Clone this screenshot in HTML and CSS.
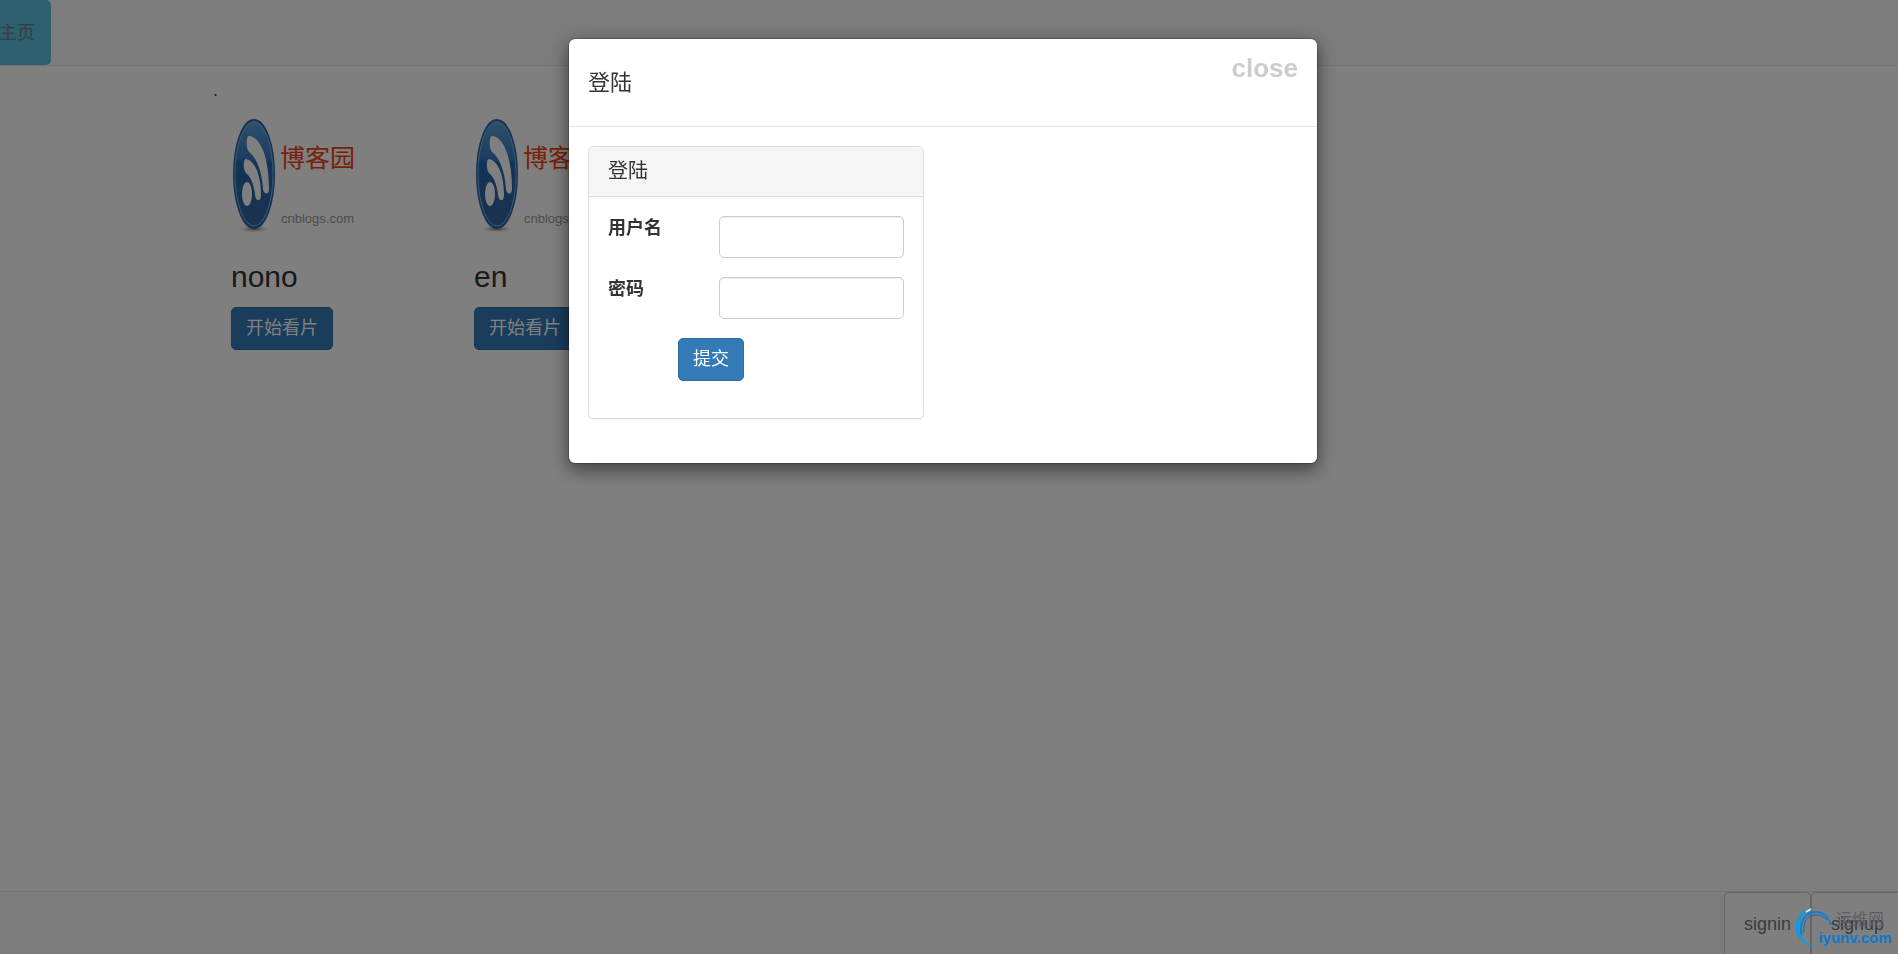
FILE: index.html
```
<!DOCTYPE html>
<html lang="zh-CN">
<head>
    <meta charset="UTF-8">
    <meta name="viewport" content="width=device-width, initial-scale=1">
    <title>主页</title>
    <link rel="stylesheet" href="styles.css">
</head>
<body>
    <!-- Shared logo artwork -->
    <svg class="defs" aria-hidden="true">
        <defs>
            <linearGradient id="ball" x1="0" y1="0" x2="0" y2="1">
                <stop offset="0" stop-color="#5f9fd8"/>
                <stop offset="0.35" stop-color="#3a7cc0"/>
                <stop offset="0.4" stop-color="#2068b2"/>
                <stop offset="1" stop-color="#38639f"/>
            </linearGradient>
            <radialGradient id="shade">
                <stop offset="0" stop-color="#6a625c"/>
                <stop offset="1" stop-color="#fff" stop-opacity="0"/>
            </radialGradient>
            <symbol id="logo" viewBox="0 0 128 128">
                <ellipse cx="23" cy="114" rx="18" ry="4" fill="url(#shade)"/>
                <ellipse cx="23" cy="59" rx="20" ry="54" fill="url(#ball)" stroke="#2e65a5" stroke-width="2"/>
                <ellipse cx="23" cy="59" rx="19" ry="52" fill="none" stroke="#78b8e6" stroke-width="1"/>
                <path d="M18 21C31 22 38 46 38 74C38 80 33 80 32 74C31 56 25 42 18 37C15 34 15 21 18 21Z" fill="#fff"/>
                <path d="M15 44C25 46 30 62 30 80C30 87 25 87 24 80C23 70 20 62 15 58C12 55 12 44 15 44Z" fill="#fff"/>
                <ellipse cx="16" cy="79" rx="5" ry="12" fill="#fff"/>
                <text class="logo-name" x="49" y="52">博客园</text>
                <text class="logo-domain" x="50" y="108">cnblogs.com</text>
            </symbol>
        </defs>
    </svg>

    <nav class="navbar navbar-top">
        <a href="#" class="btn-home">主页</a>
    </nav>

    <main class="container">
        <p class="dot">.</p>
        <div class="row">
            <div class="card">
                <svg class="card-img" role="img" aria-label="博客园"><use href="#logo"/></svg>
                <h3>nono</h3>
                <a href="#" class="btn">开始看片</a>
            </div>
            <div class="card">
                <svg class="card-img" role="img" aria-label="博客园"><use href="#logo"/></svg>
                <h3>en</h3>
                <a href="#" class="btn">开始看片</a>
            </div>
        </div>
    </main>

    <nav class="navbar navbar-bottom">
        <button type="button" class="btn-nav">signin</button>
        <button type="button" class="btn-nav">signup</button>
    </nav>

    <!-- Login modal -->
    <div class="modal" id="loginModal">
        <div class="modal-content" role="dialog" aria-labelledby="modalTitle">
            <div class="modal-header">
                <h4 id="modalTitle">登陆</h4>
                <button type="button" class="close">close</button>
            </div>
            <div class="modal-body">
                <div class="panel">
                    <div class="panel-heading">登陆</div>
                    <form class="panel-body">
                        <div class="form-group">
                            <label for="username">用户名</label>
                            <input type="text" id="username" name="username">
                        </div>
                        <div class="form-group">
                            <label for="password">密码</label>
                            <input type="password" id="password" name="password">
                        </div>
                        <button type="submit" class="btn btn-submit">提交</button>
                    </form>
                </div>
            </div>
        </div>
    </div>

    <!-- Site mark -->
    <div class="mark">
        <svg class="mark-ring" viewBox="0 0 40 42" aria-hidden="true">
            <path d="M20 2C8 3 1 12 2 23C3 33 10 39 20 40C11 37 6 31 5 23C4 13 10 5 20 2Z" fill="#00a0f0"/>
            <path d="M8 29C4 17 11 6 22 6C30 6 35 12 37 19" fill="none" stroke="#0a80d8" stroke-width="2"/>
            <path d="M10 26C8 16 14 9 22 9C27 9 31 11 33 14" fill="none" stroke="#0a6cc0" stroke-width="1"/>
            <path d="M12 6L17 3" stroke="#c8ecff" stroke-width="2"/>
        </svg>
        <div class="mark-text">
            <span class="mark-name">运维网</span>
            <span class="mark-domain">iyunv.com</span>
        </div>
    </div>
</body>
</html>
```
FILE: styles.css
```
* {
    box-sizing: border-box;
}

body {
    margin: 0;
    font-family: "Liberation Sans", "Noto Sans CJK SC", sans-serif;
    font-size: 18px;
    line-height: 25px;
    color: #333;
    background-color: #fff;
}

button,
input {
    font-family: inherit;
    font-size: inherit;
    line-height: inherit;
}

.defs {
    position: absolute;
    width: 0;
    height: 0;
}

/* Navbars */
.navbar {
    display: flex;
    background-color: #f8f8f8;
    overflow: hidden;
}

.navbar-top {
    border-bottom: 1px solid #e7e7e7;
}

.btn-home {
    margin-left: -17px;
    padding: 21px 16px 19px;
    border-radius: 5px;
    background-color: #5bc0de;
    color: #777;
    text-decoration: none;
}

.navbar-bottom {
    position: fixed;
    left: 0;
    right: 0;
    bottom: 0;
    height: 63px;
    justify-content: flex-end;
    align-items: flex-start;
    border-top: 1px solid #e7e7e7;
}

.btn-nav {
    flex: none;
    padding: 19px;
    border: 1px solid #ccc;
    border-radius: 5px;
    background-color: #fff;
    color: #777;
}

.btn-nav:last-child {
    margin-right: -6px;
}

/* Cards */
.container {
    max-width: 1472px;
    margin: 0 auto;
    padding: 12px 14px 0 0;
}

.dot {
    margin: 0 0 12px;
}

.row {
    display: grid;
    grid-template-columns: repeat(6, 1fr);
}

.card {
    padding: 0 18px;
}

.card-img {
    display: block;
    width: 128px;
    height: 128px;
}

.logo-name {
    font-family: "Noto Sans CJK SC", sans-serif;
    font-size: 25px;
    fill: #f04010;
}

.logo-domain {
    font-size: 13px;
    fill: #999;
}

.card h3 {
    margin: 17px 0 13px;
    font-size: 30px;
    font-weight: 500;
    line-height: 34px;
}

.btn {
    display: inline-block;
    padding: 8px 14px;
    border: 1px solid #2e6da4;
    border-radius: 5px;
    background-color: #337ab7;
    color: #fff;
    text-decoration: none;
    cursor: pointer;
}

/* Modal */
.modal {
    position: fixed;
    top: 0;
    left: 0;
    width: 100%;
    height: 100%;
    padding: 38px 12px 0 0;
    background-color: rgba(0, 0, 0, 0.5);
}

.modal-content {
    max-width: 750px;
    margin: 0 auto;
    border: 1px solid rgba(0, 0, 0, 0.2);
    border-radius: 7px;
    background-color: #fff;
    background-clip: padding-box;
    box-shadow: 0 6px 18px rgba(0, 0, 0, 0.5);
}

.modal-header {
    display: flex;
    justify-content: space-between;
    align-items: flex-start;
    padding: 17px 19px 16px;
    border-bottom: 1px solid #e5e5e5;
}

.modal-header h4 {
    margin: 12px 0;
    font-size: 22px;
    font-weight: 400;
    line-height: 30px;
}

.close {
    padding: 0;
    border: 0;
    background: none;
    color: #ccc;
    font-size: 26px;
    font-weight: bold;
    cursor: pointer;
}

.modal-body {
    padding: 19px 19px 44px;
}

.panel {
    max-width: 336px;
    border: 1px solid #ddd;
    border-radius: 5px;
    box-shadow: 0 1px 1px rgba(0, 0, 0, 0.05);
}

.panel-heading {
    padding: 12px 19px;
    border-bottom: 1px solid #ddd;
    border-radius: 4px 4px 0 0;
    background-color: #f5f5f5;
    font-size: 20px;
}

.panel-body {
    padding: 19px 19px 37px;
}

.form-group {
    display: grid;
    grid-template-columns: 3fr 5fr;
    align-items: start;
    margin-bottom: 19px;
}

.form-group label {
    font-weight: bold;
}

.form-group input {
    width: 100%;
    height: 42px;
    padding: 8px 14px;
    border: 1px solid #ccc;
    border-radius: 5px;
    background-color: #fff;
    box-shadow: inset 0 1px 1px rgba(0, 0, 0, 0.075);
}

.btn-submit {
    display: block;
    margin-left: 70px;
}

/* Site mark */
.mark {
    position: fixed;
    right: 6px;
    bottom: 6px;
    display: flex;
}

.mark-ring {
    width: 40px;
    height: 42px;
    margin-right: -15px;
}

.mark-text {
    display: flex;
    flex-direction: column;
    line-height: 18px;
}

.mark-name {
    margin-top: 5px;
    padding-left: 17px;
    font-size: 16px;
    color: #5c5c66;
}

.mark-domain {
    font-size: 15px;
    font-weight: bold;
    color: #0a78d2;
}
```
